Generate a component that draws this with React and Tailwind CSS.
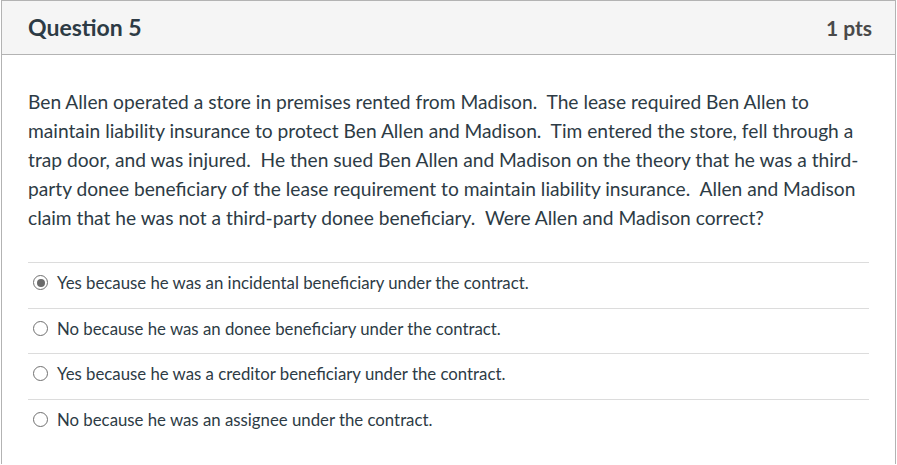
import React from 'react'

const answers = [
  { text: 'Yes because he was an incidental beneficiary under the contract.', checked: true },
  { text: 'No because he was an donee beneficiary under the contract.', checked: false },
  { text: 'Yes because he was a creditor beneficiary under the contract.', checked: false },
  { text: 'No because he was an assignee under the contract.', checked: false },
]

function Radio({ checked }) {
  return (
    <span className="flex h-[15px] w-[15px] shrink-0 items-center justify-center rounded-full border-[1.5px] border-[#707070] bg-white">
      {checked && <span className="h-[8px] w-[8px] rounded-full bg-[#6b6b6b]" />}
    </span>
  )
}

export default function App() {
  return (
    <div className="h-[465px] w-[897px] overflow-hidden bg-white font-['Lato','Liberation_Sans',sans-serif] text-[#2d3b45]">
      <div className="ml-px w-[895px] border border-b-0 border-[#b3b3b3]">
        {/* header */}
        <div className="flex h-[54px] items-center justify-between border-b border-[#b3b3b3] bg-[#f5f5f5] pl-[26px] pr-[23px]">
          <h2 className="text-[23px] font-bold">Question 5</h2>
          <span className="text-[21px] font-bold text-[#4a4a4a]">1 pts</span>
        </div>

        {/* body */}
        <div className="px-[26px] pt-[32px] pb-[20px]">
          <p className="text-[19.2px] leading-[29px]">
            Ben Allen operated a store in premises rented from Madison.&nbsp; The lease required Ben Allen to
            maintain liability insurance to protect Ben Allen and Madison.&nbsp; Tim entered the store, fell through a
            trap door, and was injured.&nbsp; He then sued Ben Allen and Madison on the theory that he was a third-party
            donee beneficiary of the lease requirement to maintain liability insurance.&nbsp; Allen and Madison claim
            that he was not a third-party donee beneficiary.&nbsp; Were Allen and Madison correct?
          </p>

          <div className="mt-[30px]">
            {answers.map((a) => (
              <div
                key={a.text}
                className="flex h-[45.5px] items-center gap-[9px] border-t border-[#dcdcdc] pb-[5px] pl-[5px] text-[16.8px]"
              >
                <Radio checked={a.checked} />
                <span>{a.text}</span>
              </div>
            ))}
          </div>
        </div>
      </div>
    </div>
  )
}
